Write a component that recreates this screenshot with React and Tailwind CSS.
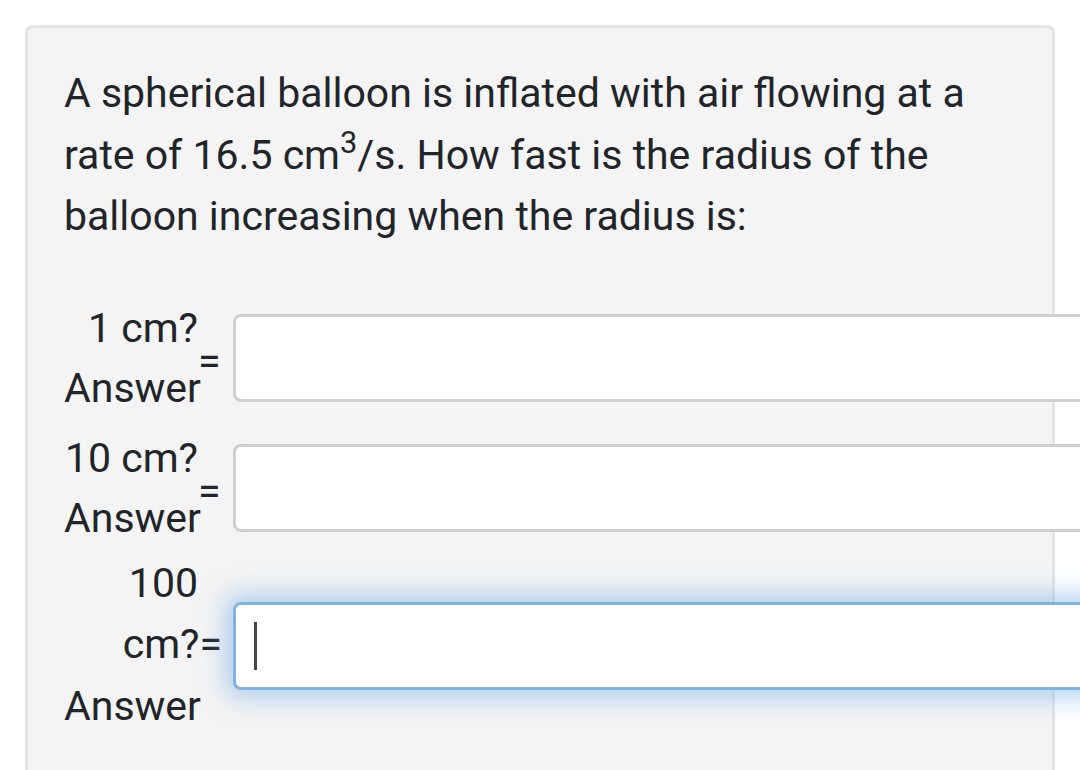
import React from "react";

const font = { fontFamily: "Roboto, 'Noto Sans', sans-serif" };

const Field = ({ focused }) => (
    <div
        className={
            "h-[88px] w-[900px] shrink-0 rounded-[8px] bg-white flex items-center pl-[18px] " +
            (focused
                ? "border-[3px] border-[#80b3e2] shadow-[0_0_24px_8px_rgba(110,170,230,0.5)]"
                : "border-[3px] border-[#cfcfcf]")
        }
    >
        {focused && <div className="w-[3px] h-[48px] bg-[#444]" />}
    </div>
);

const App = () => {
    return (
        <div className="w-[1080px] h-[770px] overflow-hidden bg-white text-[#212529] text-[41px]" style={font}>
            <div className="ml-[25px] mt-[25px] w-[1030px] h-[800px] rounded-[8px] border-[3px] border-[#e4e4e4] bg-[#f4f4f4] pt-[35px] pl-[36px] pr-[36px]">
                <p className="leading-[61.5px]">
                    A spherical balloon is inflated with air flowing at a rate of 16.5 cm<sup>3</sup>/s. How fast is the radius of the balloon increasing when the radius is:
                </p>

                <div className="mt-[50px] flex items-center leading-[60px]">
                    <div className="w-[134px] shrink-0 text-right">
                        <div>1 cm?</div>
                        <div>Answer</div>
                    </div>
                    <span className="w-[24px] shrink-0 mt-[6px]">=</span>
                    <div className="ml-[11px] shrink-0">
                        <Field />
                    </div>
                </div>

                <div className="mt-[10px] flex items-center leading-[60px]">
                    <div className="w-[134px] shrink-0 text-right">
                        <div>10 cm?</div>
                        <div>Answer</div>
                    </div>
                    <span className="w-[24px] shrink-0 mt-[6px]">=</span>
                    <div className="ml-[11px] shrink-0">
                        <Field />
                    </div>
                </div>

                <div className="mt-[5px] flex items-start leading-[61.5px]">
                    <div className="w-[158px] shrink-0">
                        <div className="w-[134px] text-right">100</div>
                        <div className="text-right">cm?=</div>
                        <div>Answer</div>
                    </div>
                    <div className="ml-[11px] mt-[49px] shrink-0">
                        <Field focused />
                    </div>
                </div>
            </div>
        </div>
    );
};

export default App;
